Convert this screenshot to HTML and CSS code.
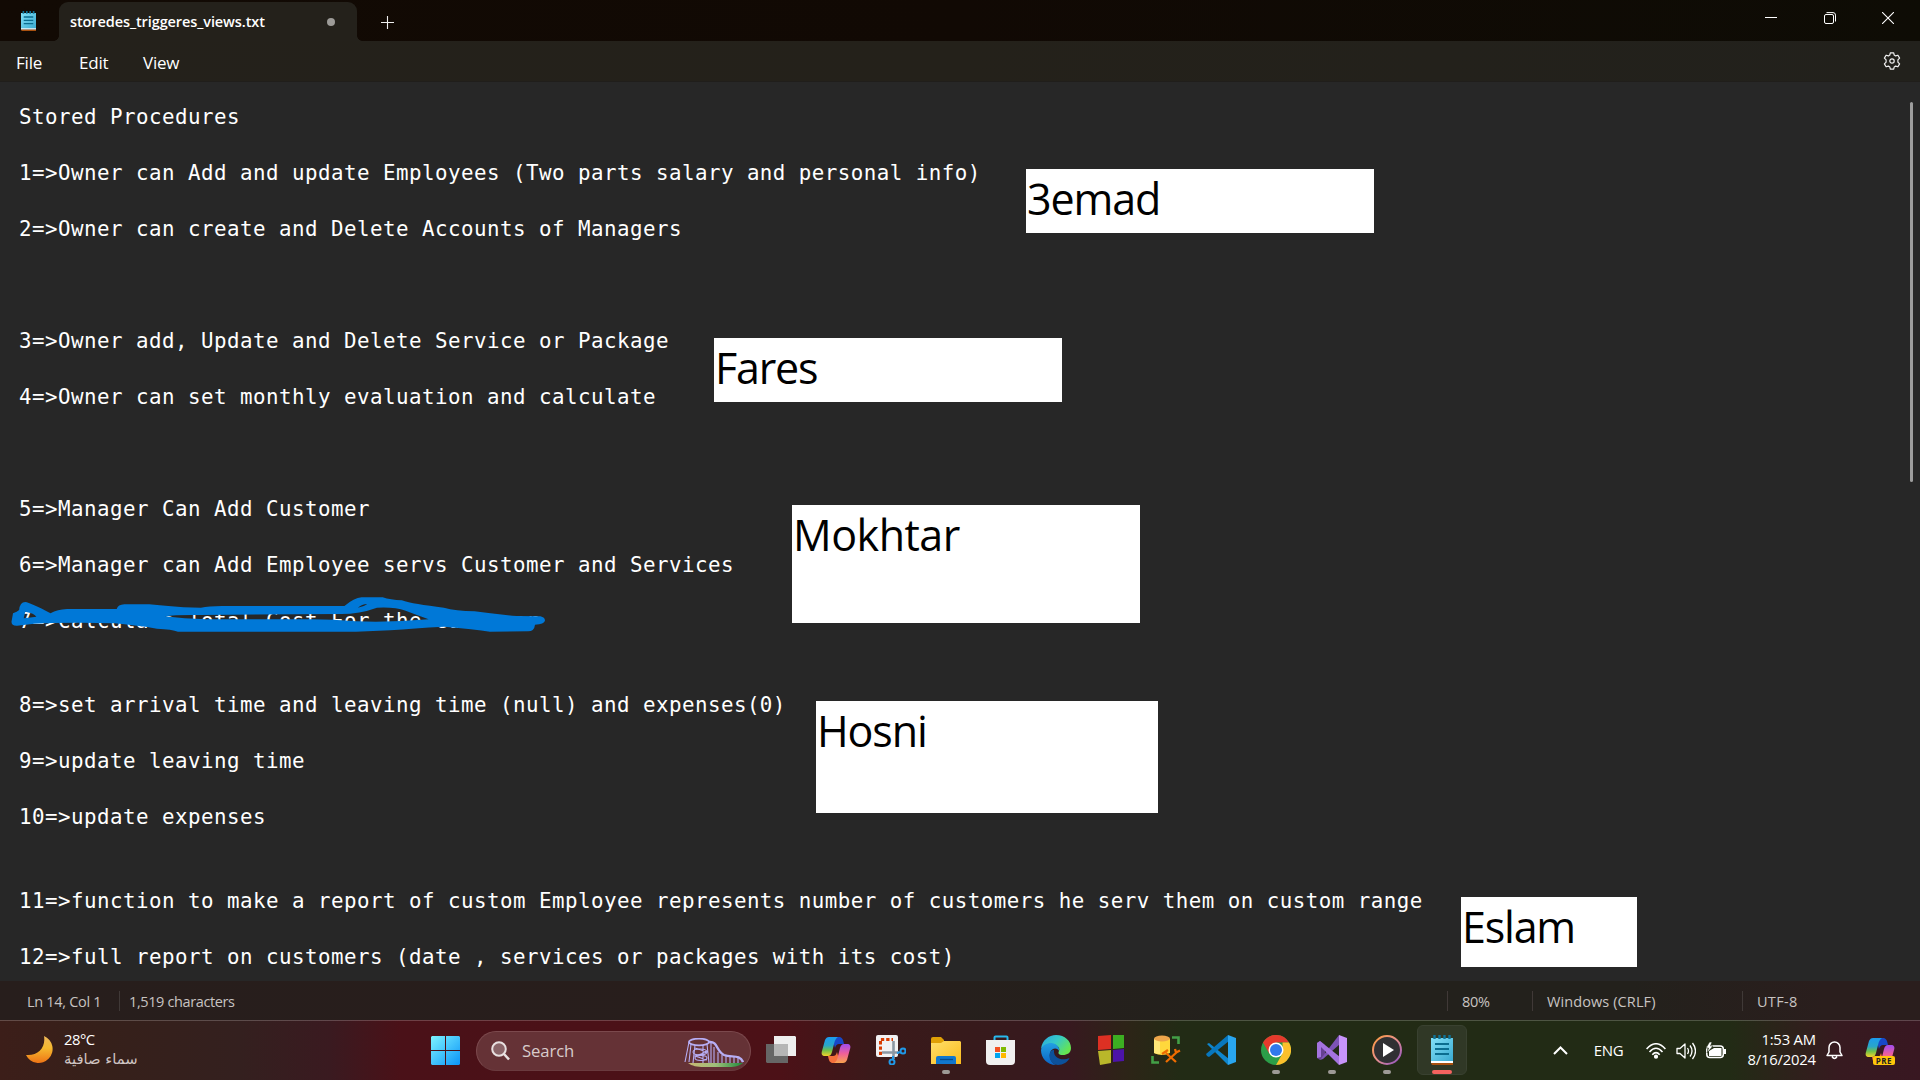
FILE: index.html
```html
<!DOCTYPE html>
<html lang="en">
<head>
<meta charset="utf-8">
<title>storedes_triggeres_views.txt - Notepad</title>
<link rel="stylesheet" href="styles.css">
</head>
<body>
<svg width="0" height="0" class="defs" aria-hidden="true">
  <defs>
    <linearGradient id="pad" x1="0" y1="0" x2="1" y2="1"><stop offset="0" stop-color="#83e0f7"/><stop offset="1" stop-color="#38a9d0"/></linearGradient>
    <linearGradient id="moon" x1="0" y1="0" x2="0" y2="1"><stop offset="0" stop-color="#f0b85a"/><stop offset=".45" stop-color="#f5b92e"/><stop offset="1" stop-color="#ee7416"/></linearGradient>
    <linearGradient id="win" gradientUnits="userSpaceOnUse" x1="0" y1="0" x2="29" y2="29"><stop offset="0" stop-color="#7df3ff"/><stop offset="1" stop-color="#0a94f8"/></linearGradient>
    <linearGradient id="copA" x1="0" y1="0" x2="0" y2="1"><stop offset="0" stop-color="#1b9bf0"/><stop offset=".45" stop-color="#2aa6c8"/><stop offset=".7" stop-color="#6fc04a"/><stop offset="1" stop-color="#f4d22a"/></linearGradient>
    <linearGradient id="copB" x1="0" y1="0" x2="0" y2="1"><stop offset="0" stop-color="#a04cf0"/><stop offset=".5" stop-color="#ee5f9a"/><stop offset="1" stop-color="#f9a44c"/></linearGradient>
    <linearGradient id="fold" x1="0" y1="0" x2="1" y2="1"><stop offset="0" stop-color="#ffdf6b"/><stop offset="1" stop-color="#fcbc1c"/></linearGradient>
    <linearGradient id="edgeA" x1="0" y1="0" x2="1" y2=".6"><stop offset="0" stop-color="#2aa4e0"/><stop offset=".5" stop-color="#35c8c9"/><stop offset="1" stop-color="#66e550"/></linearGradient>
    <linearGradient id="edgeB" x1="0" y1="0" x2="0" y2="1"><stop offset="0" stop-color="#22a0e2"/><stop offset="1" stop-color="#0b63c4"/></linearGradient>
    <linearGradient id="grass" x1="0" y1="0" x2="1" y2="0"><stop offset="0" stop-color="#c9b872"/><stop offset=".5" stop-color="#9fc07a"/><stop offset="1" stop-color="#1f8a3c"/></linearGradient>
    <linearGradient id="ring" x1="0" y1="0" x2="1" y2="1"><stop offset="0" stop-color="#ff9b3c"/><stop offset=".5" stop-color="#e58f8f"/><stop offset="1" stop-color="#8a4fc8"/></linearGradient>
    <symbol id="copilot" viewBox="0 0 30 28">
      <path d="M11 1h7c3 0 4 2 5 7h-5c-2 0-3 1-4 4z" fill="#1748c8"/>
      <path d="M8 1h9c-2 1-3 3-4 7l-2 8c-1 3-2 4-4 4H4c-3 0-4-2-3-5L4 4c1-2 2-3 4-3z" fill="url(#copA)"/>
      <path d="M19 27h-7c-3 0-4-2-5-7h5c2 0 3-1 4-4z" fill="#f5703c"/>
      <path d="M22 27h-9c2-1 3-3 4-7l2-8c1-3 2-4 4-4h3c3 0 4 2 3 5l-3 11c-1 2-2 3-4 3z" fill="url(#copB)"/>
    </symbol>
    <symbol id="notepad" viewBox="0 0 22 30">
      <path d="M0 3h22v24H0z" fill="url(#pad)"/><path d="M0 26h22v2H0z" fill="#fff"/><path d="M0 28h22v2H1z" fill="#a8500f"/>
      <path d="M4 9h14M4 14h14M4 19h14" stroke="#0b6d8f" stroke-width="2"/>
      <path d="M3.500 0v4M8.500 0v4M13.500 0v4M18.500 0v4" stroke="#0e7296" stroke-width="2.400"/>
    </symbol>
  </defs>
</svg>

<header class="titlebar">
  <svg class="app-icon" width="15" height="20" preserveAspectRatio="none" viewBox="0 0 22 30"><use href="#notepad" width="22" height="30"/></svg>
  <div class="tab"><span class="tab-name">storedes_triggeres_views.txt</span><i class="unsaved"></i></div>
  <svg class="new-tab" width="13" height="13"><path d="M6.500 0v13M0 6.500h13" stroke="#eee" stroke-width="1.100"/></svg>
  <div class="controls">
    <svg width="12" height="14"><path d="M0 5.500h12" stroke="#fff"/></svg>
    <svg width="12" height="12" fill="none" stroke="#fff"><rect x=".5" y="2.500" width="9" height="9" rx="1.500"/><path d="M2.500 .6h6.500a2.500 2.500 0 0 1 2.500 2.500v6.400"/></svg>
    <svg width="12" height="12"><path d="M0 0l12 12M12 0L0 12" stroke="#fff" stroke-width="1.100"/></svg>
  </div>
</header>

<nav class="menubar">
  <span class="m-file">File</span><span class="m-edit">Edit</span><span class="m-view">View</span>
  <svg class="gear" width="18" height="18" viewBox="0 0 18 18" fill="none" stroke="#f0f0f0" stroke-width="1.200"><path d="M7.300 .8h3.400l.5 2.300 1.400.8 2.300-.7 1.700 2.900-1.700 1.700v2.400l1.700 1.700-1.700 2.900-2.300-.7-1.400.8-.5 2.300H7.300l-.5-2.300-1.400-.8-2.300.7-1.700-2.900 1.700-1.700V7.800L1.400 6.100l1.700-2.900 2.300.7 1.400-.8z" stroke-linejoin="round"/><circle cx="9" cy="9" r="2.200"/></svg>
</nav>

<main class="editor">
  <div class="text">
    <p>Stored Procedures</p>
    <p>1=&gt;Owner can Add and update Employees (Two parts salary and personal info)</p>
    <p class="gap3">2=&gt;Owner can create and Delete Accounts of Managers</p>
    <p>3=&gt;Owner add, Update and Delete Service or Package</p>
    <p class="gap3">4=&gt;Owner can set monthly evaluation and calculate</p>
    <p>5=&gt;Manager Can Add Customer</p>
    <p>6=&gt;Manager can Add Employee servs Customer and Services</p>
    <p class="gap2">7=&gt;Calculate Total Cost For the Customer</p>
    <p>8=&gt;set arrival time and leaving time (null) and expenses(0)</p>
    <p>9=&gt;update leaving time</p>
    <p class="gap2">10=&gt;update expenses</p>
    <p>11=&gt;function to make a report of custom Employee represents number of customers he serv them on custom range</p>
    <p>12=&gt;full report on customers (date , services or packages with its cost)</p>
  </div>
  <svg class="scribble" width="600" height="120"><path transform="scale(.3827 .3333)" fill="#0078d7" fill-rule="evenodd" d="M30 185L34 160Q45 155 50 150Q52 126 66 126Q80 128 132 160Q150 148 175 147L305 147Q308 134 325 133L390 133Q430 138 480 142L525 143Q545 138 580 138L900 138Q925 114 945 112L1000 112Q1020 120 1050 121Q1080 133 1160 143Q1190 153 1240 154Q1290 162 1350 168L1412 169Q1424 172 1424 182Q1422 192 1398 194Q1396 214 1380 214L1280 215Q1240 208 1160 200Q1080 205 1020 211L930 215L465 215Q450 208 410 206Q350 195 300 190Q230 187 132 189Q90 190 45 197Q30 198 30 185ZM66 155Q90 160 95 170Q80 172 62 175ZM430 169Q460 164 520 165L890 162Q940 162 985 143Q1030 140 1060 152Q1090 165 1120 178Q1020 188 930 184Q860 177 800 178L540 178Q480 176 430 169ZM935 143Q945 133 960 132Q950 141 935 143Z"/></svg>
  <div class="note n1">3emad</div>
  <div class="note n2">Fares</div>
  <div class="note n3">Mokhtar</div>
  <div class="note n4">Hosni</div>
  <div class="note n5">Eslam</div>
  <i class="scrollbar"></i>
</main>

<footer class="status">
  <span class="s-pos">Ln 14, Col 1</span><span class="s-count">1,519 characters</span>
  <span class="s-zoom">80%</span><span class="s-eol">Windows (CRLF)</span><span class="s-enc">UTF-8</span>
</footer>

<div class="taskbar">
  <div class="weather">
    <svg width="28" height="28" viewBox="0 0 28 28"><path d="M18 0A14 14 0 1 1 0 19C12 20 20 12 18 0Z" fill="url(#moon)"/></svg>
    <div><div class="temp">28°C</div><div class="sky" lang="ar" dir="rtl">سماء صافية</div></div>
  </div>
  <svg class="start" width="29" height="29" fill="url(#win)"><path d="M1 0h13v14H0V1zM15 0h13l1 1v13H15zM0 15h14v14H1l-1-1zM15 15h14v13l-1 1H15z"/></svg>
  <div class="search">
    <svg width="19" height="20" viewBox="0 0 19 20" fill="none" stroke="#e8e0e0" stroke-width="2"><circle cx="8" cy="8" r="6.800" fill="#8a6468"/><path d="M13 13l5 5.500" stroke-width="2.600"/></svg>
    <span>Search</span>
    <svg class="coaster" width="60" height="30" viewBox="0 0 60 30" fill="none" stroke="#b7aef5" stroke-width="1.100"><path d="M4 25h55c-5 4-10 4-16 4H20c-7 0-12-1-16-4z" fill="url(#grass)" stroke="none"/><ellipse cx="15" cy="4" rx="10" ry="3.300" stroke-width="1.800"/><ellipse cx="16" cy="14" rx="7" ry="3"/><ellipse cx="17" cy="20" rx="6" ry="2.500"/><path d="M5 4L1 24M7 6L5 24M11 7L9 25M19 7v18M23 6l2 19M27 5v20M30 9v16M34 14v11M38 17v8M42 18v7M46 18v7M50 18v7M54 20v5M11 10l12 4-12 4 12 4"/><path d="M25 4c9-1 7 9 15 13 7 3 16-1 19 7" stroke-width="2.400"/></svg>
  </div>
  <div class="apps">
    <div class="app"><svg width="30" height="28"><path d="M0 8h22v19H1l-1-1z" fill="#666"/><path d="M8 0h21l1 1v19H8z" fill="#eee"/><path d="M8 8h14v12H8z" fill="#b5b5b5"/></svg></div>
    <div class="app"><svg width="30" height="28"><use href="#copilot"/></svg></div>
    <div class="app"><svg width="30" height="30"><rect width="22" height="22" rx="2" fill="#f1f1f3"/><path d="M4.500 20V4.500H17" fill="none" stroke="#d83b01" stroke-width="3" stroke-dasharray="3.300 2"/><path d="M17.500 6v18M6 17.500h17" stroke="#8b97a3" stroke-width="2.600"/><g fill="none" stroke="#2099e8" stroke-width="2"><circle cx="27" cy="16" r="2.500"/><circle cx="16" cy="27" r="2.500"/><path d="M21 18l4-1M17 21v4"/></g></svg></div>
    <div class="app running"><svg width="30" height="27"><path d="M0 2q0-2 2-2h8l3 3v5H0z" fill="#e0a006"/><path d="M0 6h10l3-2h16l1 1v22H0z" fill="url(#fold)"/><path d="M5 27v-6q0-2 2-2h16q2 0 2 2v6z" fill="#1177cd"/><path d="M9 22.500h13" stroke="#064b8c" stroke-width="1.300"/></svg></div>
    <div class="app"><svg width="29" height="30"><path d="M8.500 7V2.500q0-1 1-1h11q1 0 1 1V7" fill="none" stroke="#28b9ee" stroke-width="2"/><path d="M0 5h29v21q0 4-4 4H4q-4 0-4-4z" fill="#f0f0f0"/><path d="M9 12h5v5H9z" fill="#f25022"/><path d="M15 12h5v5h-5z" fill="#7fba00"/><path d="M9 18h5v5H9z" fill="#00a4ef"/><path d="M15 18h5v5h-5z" fill="#ffb900"/></svg></div>
    <div class="app"><svg width="30" height="30"><path d="M0 14C1 5 8 0 15 0c9 0 15 6 15 13 0 5-4 7-8 7-5 0-5-2-4-4C20 12 13 8 8 9c-4 1-7 3-8 5z" fill="url(#edgeA)"/><path d="M0 15c1-5 6-7 10-7 5 0 9 4 8 8-1-3-7-4-9 2-1 6 2 10 6 12C6 30 0 23 0 15z" fill="url(#edgeB)"/><path d="M10 16c-4 5 0 14 7 14 5 0 10-3 11.500-7C22 26 12 24 13 15c-1 0-2 0-3 1z" fill="#0c519b"/></svg></div>
    <div class="app"><svg width="28" height="30"><path d="M1 1l13-1v14L1 15z" fill="#dd3023"/><path d="M16 0h11v13l-11 1z" fill="#3cae22"/><path d="M1 16l13-1v13L3 30z" fill="#b9b72a"/><path d="M16 15l11-1v12l-11 1z" fill="#4c14a8"/></svg></div>
    <div class="app"><svg width="30" height="30"><path d="M3 4h16v14q-8 4-16 0z" fill="#ffd83c"/><path d="M3 4h6v15q-4 0-6-1z" fill="#ffe878"/><ellipse cx="11" cy="3.500" rx="8" ry="3" fill="#eda64b"/><path d="M21 2.500h6.500V9M1.500 21v6.500H8" fill="none" stroke="#43a047" stroke-width="2.600"/><path d="M15 27l11-10M15 18l10 9M11 19l6-4M24 14l1 3.500 4-2" stroke="#ef6c00" stroke-width="2.300" fill="none"/></svg></div>
    <div class="app"><svg width="30" height="30"><path d="M1 9l2-1 20 16-1 6z" fill="#0f86cc"/><path d="M1 21l2 1L23 6l-1-6L0 19z" fill="#0877bd"/><path d="M22 0l8 3v24l-8 3z" fill="#29a6f0"/></svg></div>
    <div class="app running"><svg width="30" height="30"><circle cx="15" cy="15" r="15" fill="#2b9e48"/><path d="M2 7.500A15 15 0 0 1 28 7.500H15L8.500 19z" fill="#e53a2c"/><path d="M28 7.500A15 15 0 0 1 15 30l6.500-11.500V7.500z" fill="#fcc02b"/><circle cx="15" cy="15" r="7.500" fill="#fff"/><circle cx="15" cy="15" r="6" fill="#3079ec"/></svg></div>
    <div class="app running"><svg width="30" height="30"><path d="M0 8l3-2 5 4v11l-5 4-3-2z" fill="#654091"/><path d="M3 25L22 0l1 9L6 24z" fill="#7d53b5"/><path d="M0 8l3-2 20 16-1 8L4 12v10l-4 1z" fill="#a473df"/><path d="M22 0l8 3v24l-8 3z" fill="#c894fa"/></svg></div>
    <div class="app running"><svg width="30" height="30"><circle cx="15" cy="15" r="14" fill="#303033" stroke="url(#ring)" stroke-width="2"/><path d="M11 8l11 7-11 7z" fill="#fff"/></svg></div>
    <div class="app active"><svg width="22" height="30"><use href="#notepad"/></svg></div>
  </div>
  <div class="tray">
    <svg class="chev" width="15" height="9"><path d="M1 8l6.500-6.500L14 8" fill="none" stroke="#fff" stroke-width="2"/></svg>
    <span class="lang">ENG</span>
    <svg class="wifi" width="20" height="16" viewBox="0 0 20 16" fill="none" stroke="#fff" stroke-width="1.600"><path d="M.6 6Q10-4.500 19.400 6M3.500 9Q10 1.500 16.500 9M6.300 11.700Q10 7.500 13.700 11.700"/><circle cx="10" cy="13.700" r="1.300" fill="#fff"/></svg>
    <svg class="vol" width="20" height="18" viewBox="0 0 20 18" fill="none" stroke="#fff" stroke-width="1.300"><path d="M1 6.500h3l5-4.500v14l-5-4.500H1zM11.500 6q2 3 0 6M14 3.500q4 5.500 0 11M16.500 1q6 8 0 16" stroke-linejoin="round"/></svg>
    <svg class="bat" width="20" height="17" viewBox="0 0 20 17"><rect x=".8" y="4" width="16.500" height="11.500" rx="3" fill="none" stroke="#fff" stroke-width="1.500"/><path d="M3 9l5-3h7.500v8H3zM18 7h2v5h-2z" fill="#fff"/><path d="M3.500 0L0 6h2.500L1 11l6-7H4.500L6 0z" fill="#fff" stroke="#222b15" stroke-width=".6"/></svg>
    <div class="clock"><div>1:53 AM</div><div>8/16/2024</div></div>
    <svg class="bell" width="17" height="19" viewBox="0 0 17 19" fill="none" stroke="#fff" stroke-width="1.500"><path d="M1 14.500L3 11V6.500a5.500 5.500 0 0 1 11 0V11l2 3.500zM6 15.500q2.500 4 5 0" stroke-linejoin="round"/></svg>
    <div class="pre"><svg width="30" height="28"><use href="#copilot"/></svg><b>PRE</b></div>
  </div>
</div>
</body>
</html>
```
FILE: styles.css
```css
* { box-sizing: border-box; }
body { margin: 0; width: 1920px; height: 1080px; overflow: hidden; display: flex; flex-direction: column; background: #272727; color: #fff; font-family: "Open Sans", "Noto Sans", sans-serif; }
svg { display: block; flex: none; }
.defs { position: absolute; }
span { white-space: nowrap; }

.titlebar { height: 41px; display: flex; background: linear-gradient(90deg, #120a04, #110904 50%, #0e0c05); }
.app-icon { margin: 11px 0 0 21px; }
.tab { position: relative; width: 298px; height: 39px; margin: 2px 0 0 23px; padding: 0 22px 0 11px; display: flex; align-items: center; justify-content: space-between; background: #24211b; border-radius: 9px 9px 0 0; }
.tab::before, .tab::after { content: ""; position: absolute; bottom: 0; width: 5px; height: 5px; }
.tab::before { left: -5px; background: radial-gradient(circle at 0 0, transparent 4.500px, #24211b 5px); }
.tab::after { right: -5px; background: radial-gradient(circle at 100% 0, transparent 4.500px, #24211b 5px); }
.tab-name { font-size: 14.500px; font-weight: 600; letter-spacing: -.1px; }
.unsaved { width: 8px; height: 8px; border-radius: 50%; background: #9d9b98; }
.new-tab { margin: 16px 0 0 24px; }
.controls { margin: 12px 26px 0 auto; display: flex; gap: 46.500px; }

.menubar { height: 41px; display: flex; align-items: center; background: linear-gradient(90deg, #24211b, #24211a 50%, #22211c); border-bottom: 1px solid #201e1b; font-size: 17px; letter-spacing: -.2px; }
.menubar span { flex: none; margin-top: 2px; }
.m-file { width: 63px; margin-left: 16px; }
.m-edit { width: 64px; }
.gear { margin: 0 19px 0 auto; }

.editor { position: relative; height: 899px; background: #272727; overflow: hidden; }
.text { width: max-content; padding: 21px 0 0 19px; font: 20.800px/28px "DejaVu Sans Mono", monospace; letter-spacing: .477px; display: flex; flex-direction: column; align-items: flex-start; }
.text p { margin: 0 0 28px; white-space: nowrap; }
.text .gap2 { margin-bottom: 56px; }
.text .gap3 { margin-bottom: 84px; }
.scribble { position: absolute; left: 0; top: 478px; }
.note { position: absolute; padding-left: 1px; background: #fff; color: #000; font-size: 43px; line-height: 60px; }
.n1 { left: 1026px; top: 87px; width: 348px; height: 64px; letter-spacing: -1.100px; }
.n2 { left: 714px; top: 256px; width: 348px; height: 64px; letter-spacing: -1.200px; }
.n3 { left: 792px; top: 423px; width: 348px; height: 118px; letter-spacing: -.5px; }
.n4 { left: 816px; top: 619px; width: 342px; height: 112px; letter-spacing: -1.100px; }
.n5 { left: 1461px; top: 815px; width: 176px; height: 70px; letter-spacing: -1.200px; }
.scrollbar { position: absolute; left: 1910px; top: 20px; width: 3px; height: 380px; border-radius: 2px; background: #9d9d9d; }

.status { height: 39px; display: flex; align-items: center; background: linear-gradient(90deg, #271e1c, #281e1c 40%, #23211c 65%, #23211c 85%, #2a1e1d 95%); font-size: 14.500px; letter-spacing: -.3px; color: #c8c4c2; }
.status span { flex: none; height: 20px; line-height: 22px; }
.status span + span { border-left: 1px solid #403937; }
.s-pos { width: 119px; padding-left: 27px; }
.s-count { padding-left: 9px; letter-spacing: -.38px; }
.s-zoom { width: 85px; margin-left: auto; padding-left: 14px; }
.s-eol { width: 210px; padding-left: 14px; letter-spacing: .1px; }
.s-enc { width: 178px; padding-left: 14px; letter-spacing: .3px; }

.taskbar { height: 60px; border-top: 1px solid rgba(255, 255, 255, .2); display: flex; align-items: center; background: linear-gradient(90deg, #3c1e19 0, #36201a 100px, #34201f 240px, #3a1a20 330px, #4a1118 400px, #4c1117 780px, #3b191a 870px, #371a1b 960px, #37191f 1070px, #2c2517 1130px, #222b15 1180px, #222b15 1730px, #371a20 1840px, #381721 1920px); }
.weather { width: 405px; padding-left: 26px; display: flex; align-items: center; gap: 10px; }
.weather > svg { margin-top: -1px; }
.weather > div { margin-top: -3px; }
.temp { font-size: 14.800px; line-height: 20px; letter-spacing: -.5px; }
.sky { font-family: "DejaVu Sans", "Noto Sans", sans-serif; font-size: 14.800px; line-height: 20px; color: #cfc4c2; }
.start { margin-left: 26px; }
.search { width: 275px; height: 40px; margin-left: 16px; border: 1px solid #7b494d; border-bottom-color: #6a3a3e; border-radius: 20px; background: #653236; display: flex; align-items: center; padding: 0 6px 0 14px; font-size: 16.700px; letter-spacing: -.1px; color: #d8cccc; }
.search span { margin: -1px 0 0 12px; }
.coaster { margin: 4px 0 0 auto; }
.apps { display: flex; margin: -1px 0 0 4.500px; gap: 5.120px; }
.app { position: relative; width: 50px; height: 50px; display: grid; place-items: center; border-radius: 6px; }
.active { background: #303826; border: 1px solid #394130; }
.running::after, .active::after { content: ""; position: absolute; bottom: 1px; left: 21px; width: 8px; height: 4px; border-radius: 2px; background: #9d9a96; }
.active::after { bottom: 0; left: 14px; width: 20px; background: #f4635f; }

.tray { flex: 1; display: flex; align-items: center; }
.tray > * { flex: none; }
.chev { margin-left: 86px; }
.lang { width: 61px; margin: -2px 17px 0 0; padding-left: 26px; font-size: 15px; letter-spacing: -.4px; }
.vol { margin-left: 10px; }
.bat { margin-left: 10px; }
.clock { width: 90px; margin-top: -4px; text-align: right; font-size: 14.800px; line-height: 20px; letter-spacing: -.2px; }
.bell { margin-left: 10px; }
.pre { position: relative; margin-left: 22px; }
.pre b { position: absolute; left: 8px; top: 19px; width: 22px; height: 9px; border-radius: 2px; background: #ffc60a; color: #222; font-size: 8px; line-height: 9px; text-align: center; letter-spacing: .4px; }
```
